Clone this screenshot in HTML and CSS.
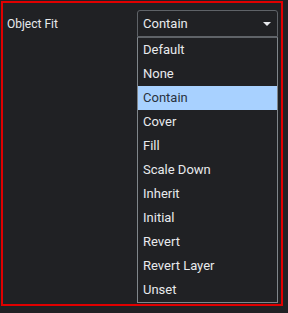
FILE: index.html
```html
<!DOCTYPE html>
<html lang="en">
<head>
    <meta charset="UTF-8">
    <title>Object Fit</title>
    <link rel="stylesheet" href="styles.css">
</head>
<body>
    <div class="cornice">
        <div class="riga">
            <span class="etichetta">Object Fit</span>
            <div class="scelta">
                <div class="selezione">
                    <span>Contain</span>
                    <svg class="freccia" width="8" height="4" viewBox="0 0 8 4"><path d="M0 0 L8 0 L4 4 Z" fill="#e8eaed"/></svg>
                </div>
                <ul class="lista">
                    <li>Default</li>
                    <li>None</li>
                    <li class="attivo">Contain</li>
                    <li>Cover</li>
                    <li>Fill</li>
                    <li>Scale Down</li>
                    <li>Inherit</li>
                    <li>Initial</li>
                    <li>Revert</li>
                    <li>Revert Layer</li>
                    <li>Unset</li>
                </ul>
            </div>
        </div>
    </div>
</body>
</html>
```

FILE: styles.css
```css
body {
    margin: 0;
    background-color: #202124;
    font-family: Roboto, "Liberation Sans", sans-serif;
    font-size: 13px;
    color: #e8eaed;
}

.cornice {
    margin: 1px 0 0 1px;
    width: 278px;
    height: 301px;
    border: 2px solid #e00000;
}

.riga {
    display: flex;
    justify-content: space-between;
    padding: 7px 3px 0 4px;
}

.etichetta {
    font-size: 12px;
    margin-top: 7px;
}

.scelta {
    width: 141px;
}

.selezione {
    display: flex;
    align-items: center;
    justify-content: space-between;
    height: 25px;
    padding: 0 5px 0 5px;
    border: 1px solid #5f6368;
    border-radius: 3px;
    border-bottom-left-radius: 0;
    border-bottom-right-radius: 0;
}

.freccia {
    margin-right: 1px;
}

.lista {
    list-style: none;
    margin: 0;
    padding: 0;
    border: 1px solid #80868b;
    border-top-color: #5f6368;
    background-color: #202124;
}

.lista li {
    height: 24px;
    line-height: 24px;
    padding-left: 5px;
}

.lista li.attivo {
    background-color: #a8d1ff;
    color: #28323e;
}
```
